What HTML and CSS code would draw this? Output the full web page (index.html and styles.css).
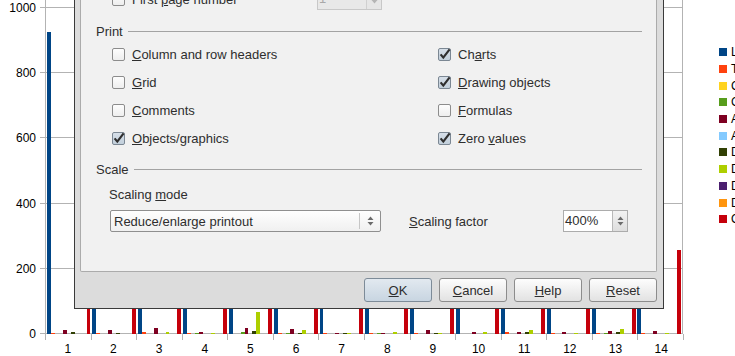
FILE: index.html
```html
<!DOCTYPE html>
<html lang="en">
<head>
    <meta charset="UTF-8">
    <title>Page Style: Sheet</title>
    <link rel="stylesheet" href="styles.css">
</head>
<body>
<div class="desktop">
    <div class="chart">
        <div class="y-labels">
            <span>1000</span><span>800</span><span>600</span><span>400</span><span>200</span><span>0</span>
        </div>
        <div class="plot-area">
            <div class="plot">
                <div class="cat"><i style="height:302px"></i><i style="height:1px"></i><i></i><i></i><i style="height:4px"></i><i></i><i style="height:2px"></i><i></i><i></i><i></i><i style="height:293px"></i></div>
                <div class="cat"><i style="height:293px"></i><i style="height:1px"></i><i></i><i></i><i style="height:4px"></i><i></i><i style="height:1px"></i><i></i><i></i><i></i><i style="height:293px"></i></div>
                <div class="cat"><i style="height:293px"></i><i style="height:2px"></i><i></i><i></i><i style="height:6px"></i><i></i><i></i><i style="height:2px"></i><i></i><i></i><i style="height:293px"></i></div>
                <div class="cat"><i style="height:293px"></i><i style="height:1px"></i><i></i><i style="height:1px"></i><i style="height:2px"></i><i></i><i></i><i style="height:1px"></i><i></i><i></i><i style="height:293px"></i></div>
                <div class="cat"><i style="height:293px"></i><i></i><i></i><i style="height:2px"></i><i style="height:6px"></i><i></i><i style="height:3px"></i><i style="height:22px"></i><i></i><i></i><i style="height:293px"></i></div>
                <div class="cat"><i style="height:293px"></i><i style="height:1px"></i><i></i><i style="height:1px"></i><i style="height:5px"></i><i></i><i style="height:1px"></i><i style="height:4px"></i><i></i><i></i><i style="height:293px"></i></div>
                <div class="cat"><i style="height:293px"></i><i style="height:1px"></i><i></i><i></i><i style="height:1px"></i><i></i><i style="height:1px"></i><i style="height:1px"></i><i></i><i></i><i style="height:293px"></i></div>
                <div class="cat"><i style="height:293px"></i><i style="height:1px"></i><i></i><i style="height:1px"></i><i style="height:1px"></i><i></i><i></i><i style="height:2px"></i><i></i><i></i><i style="height:293px"></i></div>
                <div class="cat"><i style="height:293px"></i><i style="height:1px"></i><i></i><i></i><i style="height:4px"></i><i></i><i style="height:1px"></i><i style="height:1px"></i><i></i><i></i><i style="height:293px"></i></div>
                <div class="cat"><i style="height:293px"></i><i></i><i></i><i></i><i style="height:2px"></i><i></i><i></i><i style="height:2px"></i><i></i><i></i><i style="height:293px"></i></div>
                <div class="cat"><i style="height:293px"></i><i style="height:2px"></i><i></i><i></i><i style="height:2px"></i><i></i><i style="height:2px"></i><i style="height:4px"></i><i></i><i></i><i style="height:293px"></i></div>
                <div class="cat"><i style="height:293px"></i><i style="height:1px"></i><i></i><i></i><i style="height:2px"></i><i></i><i></i><i style="height:1px"></i><i></i><i></i><i style="height:293px"></i></div>
                <div class="cat"><i style="height:293px"></i><i style="height:1px"></i><i></i><i style="height:1px"></i><i style="height:3px"></i><i></i><i style="height:2px"></i><i style="height:5px"></i><i></i><i></i><i style="height:293px"></i></div>
                <div class="cat"><i style="height:293px"></i><i style="height:1px"></i><i></i><i></i><i style="height:3px"></i><i></i><i></i><i style="height:1px"></i><i></i><i></i><i style="height:84px"></i></div>
            </div>
        </div>
        <ul class="legend">
            <li><b class="c1"></b>Lorem</li>
            <li><b class="c2"></b>Test</li>
            <li><b class="c3"></b>Cache</li>
            <li><b class="c4"></b>Graph</li>
            <li><b class="c5"></b>Analysis</li>
            <li><b class="c6"></b>Access</li>
            <li><b class="c7"></b>Data 1</li>
            <li><b class="c8"></b>Data 2</li>
            <li><b class="c9"></b>Data 3</li>
            <li><b class="c10"></b>Data 4</li>
            <li><b class="c11"></b>Other</li>
        </ul>
        <div class="x-axis">
            <span>1</span><span>2</span><span>3</span><span>4</span><span>5</span><span>6</span><span>7</span>
            <span>8</span><span>9</span><span>10</span><span>11</span><span>12</span><span>13</span><span>14</span>
        </div>
    </div>

    <div class="dialog">
        <div class="panel">
            <div class="first-row">
                <label class="check first-check"><span class="box"></span><span>First <u>p</u>age number</span></label>
                <div class="spin disabled">
                    <span class="spin-value">1</span>
                    <span class="spin-arrows">
                        <svg width="7" height="12" viewBox="0 0 7 12"><path d="M0.5 5 L3.5 1.5 L6.5 5 Z M0.5 7 L3.5 10.5 L6.5 7 Z" fill="#b5b5b5"/></svg>
                    </span>
                </div>
            </div>

            <div class="section-title">Print</div>
            <div class="check-grid">
                <label class="check"><span class="box"></span><span><u>C</u>olumn and row headers</span></label>
                <label class="check"><span class="box checked"><svg width="13" height="13" viewBox="0 0 13 13"><path d="M2.6 6.4 L5.3 9.6 L11.6 1.4" fill="none" stroke="#2f2f2f" stroke-width="2.2"/></svg></span><span>Ch<u>a</u>rts</span></label>
                <label class="check"><span class="box"></span><span><u>G</u>rid</span></label>
                <label class="check"><span class="box checked"><svg width="13" height="13" viewBox="0 0 13 13"><path d="M2.6 6.4 L5.3 9.6 L11.6 1.4" fill="none" stroke="#2f2f2f" stroke-width="2.2"/></svg></span><span><u>D</u>rawing objects</span></label>
                <label class="check"><span class="box"></span><span><u>C</u>omments</span></label>
                <label class="check"><span class="box"></span><span><u>F</u>ormulas</span></label>
                <label class="check"><span class="box checked"><svg width="13" height="13" viewBox="0 0 13 13"><path d="M2.6 6.4 L5.3 9.6 L11.6 1.4" fill="none" stroke="#2f2f2f" stroke-width="2.2"/></svg></span><span><u>O</u>bjects/graphics</span></label>
                <label class="check"><span class="box checked"><svg width="13" height="13" viewBox="0 0 13 13"><path d="M2.6 6.4 L5.3 9.6 L11.6 1.4" fill="none" stroke="#2f2f2f" stroke-width="2.2"/></svg></span><span>Zero <u>v</u>alues</span></label>
            </div>

            <div class="section-title scale-title">Scale</div>
            <div class="field-label">Scaling <u>m</u>ode</div>
            <div class="scale-row">
                <div class="combo">
                    <span class="combo-value">Reduce/enlarge printout</span>
                    <span class="combo-arrows">
                        <svg width="7" height="12" viewBox="0 0 7 12"><path d="M0.5 5 L3.5 1.5 L6.5 5 Z M0.5 7 L3.5 10.5 L6.5 7 Z" fill="#6b6b6b"/></svg>
                    </span>
                </div>
                <span class="factor-label"><u>S</u>caling factor</span>
                <div class="spin">
                    <span class="spin-value">400%</span>
                    <span class="spin-arrows">
                        <svg width="7" height="12" viewBox="0 0 7 12"><path d="M0.5 5 L3.5 1.5 L6.5 5 Z M0.5 7 L3.5 10.5 L6.5 7 Z" fill="#6b6b6b"/></svg>
                    </span>
                </div>
            </div>
        </div>

        <div class="buttons">
            <button class="btn default"><u>O</u>K</button>
            <button class="btn"><u>C</u>ancel</button>
            <button class="btn"><u>H</u>elp</button>
            <button class="btn"><u>R</u>eset</button>
        </div>
    </div>
</div>
</body>
</html>
```

FILE: styles.css
```css
html, body {
    margin: 0;
    padding: 0;
}
body {
    width: 735px;
    height: 356px;
    overflow: hidden;
    background: #fff;
    font-family: 'Liberation Sans', Arial, sans-serif;
}
.desktop {
    position: relative;
    width: 735px;
    height: 356px;
    overflow: hidden;
}

/* chart behind the dialog */
.chart {
    display: grid;
    grid-template-columns: 40px 643px 52px;
    grid-template-rows: 344px 22px;
    margin-top: -10px;
    font-size: 12px;
    color: #000;
}
.y-labels {
    grid-row: 1 / 3;
    display: flex;
    flex-direction: column;
    justify-content: space-between;
    align-items: flex-end;
    padding: 12px 4px 0 0;
    height: 338px;
}
.y-labels span {
    line-height: 12px;
}
.plot-area {
    padding-left: 5px;
    background: repeating-linear-gradient(to top, #b3b3b3 0 1px, transparent 1px 65.2px);
}
.plot {
    display: flex;
    height: 100%;
    border-left: 1px solid #b3b3b3;
    border-right: 1px solid #b3b3b3;
    box-sizing: border-box;
}
.cat {
    flex: 1;
    display: flex;
    align-items: flex-end;
    padding: 0 1px;
}
.cat i {
    flex: 1;
    display: block;
}
.cat i:nth-child(1) { background: #004586; }
.cat i:nth-child(2) { background: #ff420e; }
.cat i:nth-child(3) { background: #ffd320; }
.cat i:nth-child(4) { background: #579d1c; }
.cat i:nth-child(5) { background: #7e0021; }
.cat i:nth-child(6) { background: #83caff; }
.cat i:nth-child(7) { background: #314004; }
.cat i:nth-child(8) { background: #aecf00; }
.cat i:nth-child(9) { background: #4b1f6f; }
.cat i:nth-child(10) { background: #ff950e; }
.cat i:nth-child(11) { background: #c5000b; }

.x-axis {
    grid-column: 2;
    grid-row: 2;
    display: flex;
    padding-left: 5px;
    width: 639px;
    background: repeating-linear-gradient(to right, #b3b3b3 0 1px, transparent 1px 45.57px) 5px 0 / 639px 6px no-repeat;
}
.x-axis span {
    flex: 1;
    text-align: center;
    padding-top: 8px;
    line-height: 14px;
}

.legend {
    grid-column: 3;
    grid-row: 1;
    list-style: none;
    margin: 0;
    padding: 54px 0 0 36px;
    white-space: nowrap;
}
.legend li {
    display: flex;
    align-items: center;
    height: 16.7px;
    gap: 4px;
}
.legend b {
    width: 8px;
    height: 8px;
    flex: none;
}
.c1 { background: #004586; }
.c2 { background: #ff420e; }
.c3 { background: #ffd320; }
.c4 { background: #579d1c; }
.c5 { background: #7e0021; }
.c6 { background: #83caff; }
.c7 { background: #314004; }
.c8 { background: #aecf00; }
.c9 { background: #4b1f6f; }
.c10 { background: #ff950e; }
.c11 { background: #c5000b; }

/* dialog window on top */
.dialog {
    position: absolute;
    left: 74px;
    top: -40px;
    width: 590px;
    height: 349px;
    box-sizing: border-box;
    border: 1px solid #3a3a3a;
    background: #dcdcdc;
    padding: 0 6px 6px 5px;
    display: flex;
    flex-direction: column;
    font-size: 13px;
    color: #2e2e2e;
}
.panel {
    flex: 1;
    background: #f1f1f1;
    border: 1px solid #ababab;
    border-top: none;
    border-radius: 0 0 2px 2px;
    padding: 27px 14px 0 15px;
}
.first-row {
    display: flex;
    align-items: center;
    height: 22px;
    margin-left: 16px;
}
.first-check {
    width: 205px;
}
.check {
    display: flex;
    align-items: center;
    gap: 7px;
}
.box {
    width: 13px;
    height: 13px;
    box-sizing: border-box;
    border: 1px solid #8c8c8c;
    border-radius: 2px;
    background: linear-gradient(#fdfdfd, #eeeeee);
    flex: none;
    position: relative;
}
.box.checked {
    background: linear-gradient(#d6dfe8, #c2cfdb);
    border-color: #7b8793;
}
.box svg {
    position: absolute;
    left: -1px;
    top: -1px;
}
.section-title {
    display: flex;
    align-items: center;
    height: 16px;
    margin-top: 13px;
}
.section-title::after {
    content: '';
    flex: 1;
    height: 1px;
    background: #a3a3a3;
    margin-left: 5px;
}
.check-grid {
    display: grid;
    grid-template-columns: 326px 1fr;
    grid-auto-rows: 28px;
    margin: 1px 0 0 16px;
}
.scale-title {
    margin-top: 9px;
}
.field-label {
    margin: 10px 0 0 13px;
    line-height: 16px;
}
.scale-row {
    display: flex;
    align-items: center;
    margin: 7px 0 0 14px;
}
.combo {
    width: 271px;
    height: 22px;
    box-sizing: border-box;
    border: 1px solid #8f8f8f;
    border-radius: 2px;
    background: linear-gradient(#fefefe, #f0f0f0);
    display: flex;
    align-items: center;
}
.combo-value {
    flex: 1;
    padding-left: 3px;
}
.combo-arrows {
    width: 20px;
    height: 16px;
    border-left: 1px solid #c6c6c6;
    display: flex;
    align-items: center;
    justify-content: center;
}
.factor-label {
    width: 154px;
    margin-left: 28px;
}
.spin {
    width: 65px;
    height: 22px;
    box-sizing: border-box;
    border: 1px solid #acacac;
    display: flex;
    background: #fff;
}
.spin-value {
    flex: 1;
    padding-left: 1px;
    line-height: 20px;
}
.spin-arrows {
    width: 14px;
    border-left: 1px solid #b8b8b8;
    background: linear-gradient(#f2f2f2, #dedede);
    display: flex;
    align-items: center;
    justify-content: center;
}
.spin.disabled {
    background: #e8e8e8;
    border-color: #c8c8c8;
    color: #a8a8a8;
}
.spin.disabled .spin-arrows {
    background: #e6e6e6;
    border-color: #d0d0d0;
}
.buttons {
    display: flex;
    justify-content: flex-end;
    gap: 7px;
    margin-top: 6px;
    height: 24px;
}
.btn {
    width: 68px;
    height: 24px;
    border: 1px solid #8c8c8c;
    border-radius: 3px;
    background: linear-gradient(#fdfdfd, #e2e2e2);
    font: 13px 'Liberation Sans', Arial, sans-serif;
    color: #2e2e2e;
    padding: 0;
}
.btn.default {
    background: linear-gradient(#e2e9f0, #c8d5e1);
    border-color: #7d8b98;
}
```
